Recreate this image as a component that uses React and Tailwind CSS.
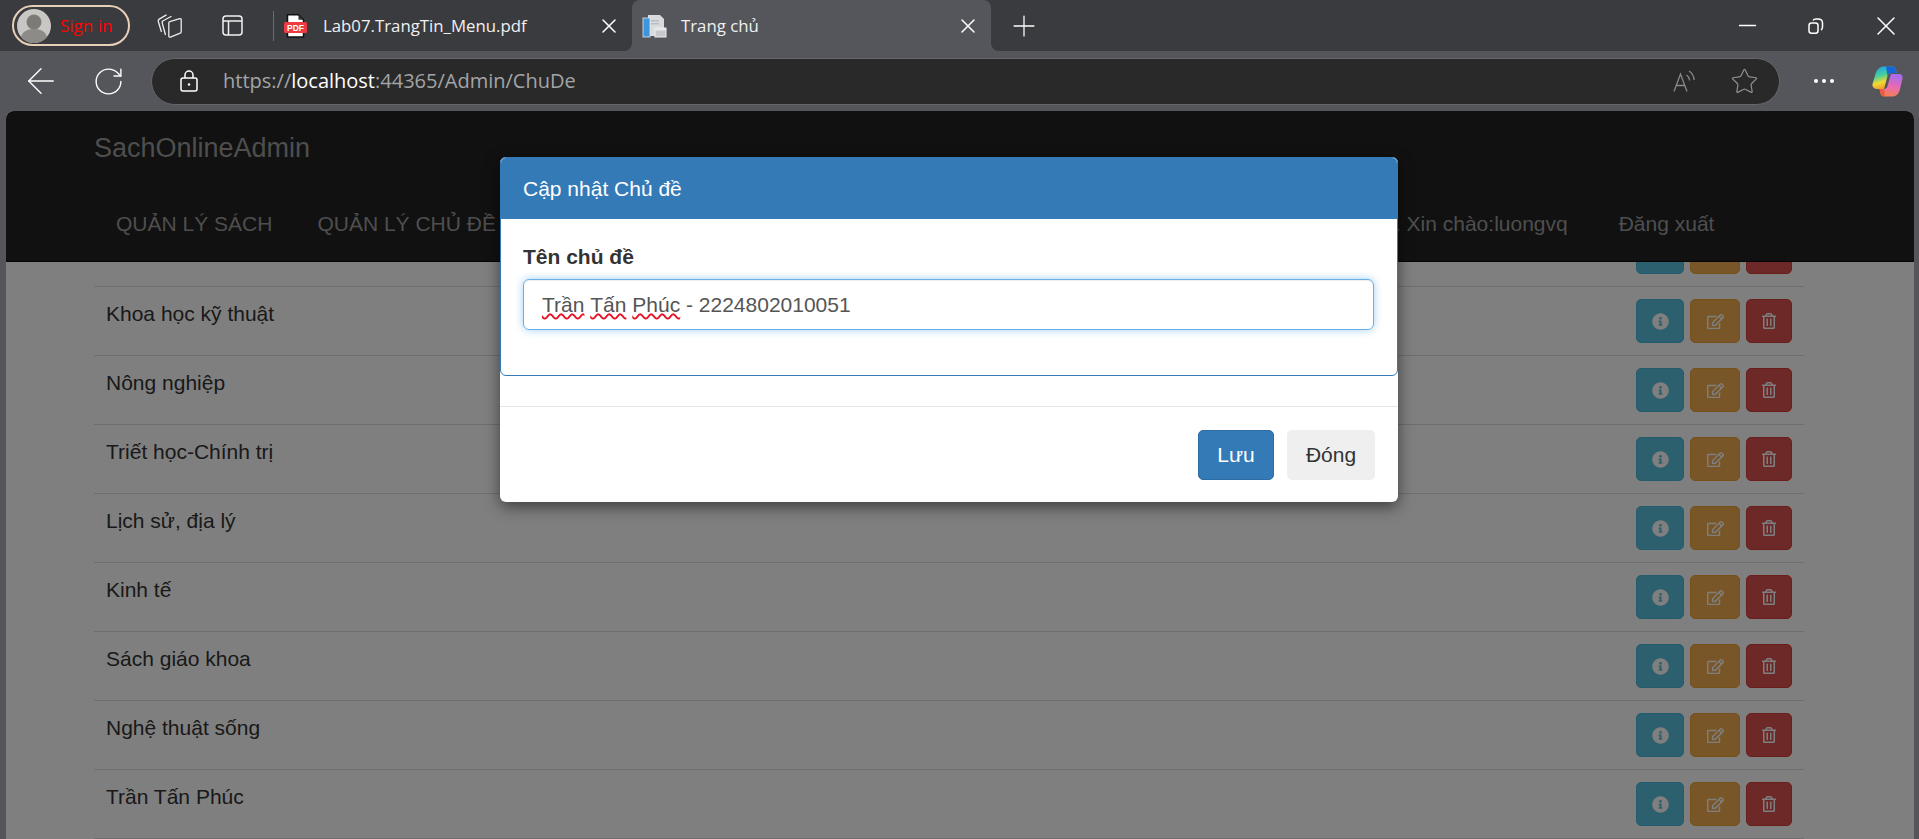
import React from 'react';
import { FaInfoCircle, FaRegEdit, FaRegTrashAlt } from 'react-icons/fa';
import { ArrowLeft, RotateCw, Plus, X, Minus, Star } from 'lucide-react';

const topics = [
  'Văn học',
  'Khoa học kỹ thuật',
  'Nông nghiệp',
  'Triết học-Chính trị',
  'Lịch sử, địa lý',
  'Kinh tế',
  'Sách giáo khoa',
  'Nghệ thuật sống',
  'Trần Tấn Phúc',
];

const Avatar = () => (
  <svg width="34" height="34" viewBox="0 0 34 34" className="shrink-0">
    <circle cx="17" cy="17" r="17" fill="#c9c7c4" />
    <circle cx="17" cy="13" r="7.500" fill="#7d7b78" />
    <path d="M4 28c2-7 8-8 13-8s11 1 13 8a17 17 0 0 1-26 0z" fill="#8d8b88" />
  </svg>
);

const WorkspacesIcon = () => (
  <svg width="25" height="24" viewBox="0 0 25 24" fill="none" stroke="#ececec" strokeWidth="1.300" className="shrink-0">
    <path d="M4.500 18L1.300 7.500C1 6.500 1.300 5.700 2.200 5.100L9.500 .9" />
    <path d="M8.500 21L5.200 9c-.3-1 0-1.800 1-2.300L14.500 2.300" />
    <path d="M12.800 7.600l10-3c.8-.2 1.400.2 1.400 1v12.200c0 .7-.3 1.100-1 1.400l-9.800 3.900c-.9.3-1.600-.2-1.600-1.100V8.700c0-.5.400-.9 1-1.100z" />
  </svg>
);

const VerticalTabsIcon = () => (
  <svg width="21" height="21" viewBox="0 0 21 21" fill="none" stroke="#f2f2f2" strokeWidth="1.500" className="shrink-0">
    <rect x="1" y="1" width="19" height="19" rx="3" />
    <path d="M1 6h19M6.500 6v14" />
  </svg>
);

const PdfIcon = () => (
  <svg width="23" height="24" viewBox="0 0 23 24" className="shrink-0">
    <path d="M3.500.8h11l5 5V23h-16z" fill="#fff" stroke="#111" strokeWidth="1.500" />
    <path d="M14.500.8v5h5" fill="#333" />
    <rect x="0" y="8" width="23" height="11" rx="1.500" fill="#f03a42" />
    <text x="11.500" y="16.800" textAnchor="middle" fontSize="8.500" fontWeight="700" fill="#fff" fontFamily="Liberation Sans, sans-serif">PDF</text>
  </svg>
);

const PageIcon = () => (
  <svg width="25" height="24" viewBox="0 0 25 24" className="shrink-0">
    <path d="M6 1h12l4 4v17H6z" fill="#d8dadd" />
    <rect x="1" y="4" width="7" height="19" fill="#3f95dc" stroke="#d8e6f2" strokeWidth="0.800" />
    <rect x="9" y="6" width="8" height="1.500" fill="#b9bcc0" />
    <rect x="9" y="9" width="8" height="1.500" fill="#b9bcc0" />
    <rect x="13" y="14" width="11" height="9" fill="#c6c8cb" stroke="#eee" />
    <rect x="13" y="14" width="11" height="2.500" fill="#e8e8e8" />
  </svg>
);

const ReadAloudIcon = () => (
  <svg width="23" height="22" viewBox="0 0 23 22" fill="none" stroke="#8a8a8a" strokeWidth="1.300" className="shrink-0">
    <path d="M1 21.500L7.500 4 14 21.500M3.200 15.500h8.600" />
    <path d="M13.500 5c1.700 1 2.800 2.700 3.200 5.500M16 1c3 1.800 4.800 5 5.200 9" />
  </svg>
);

const CopilotLogo = () => (
  <svg width="31" height="31" viewBox="0 0 31 31" className="shrink-0">
    <defs>
      <linearGradient id="copilotLeft" x1="0" y1="0" x2="0.300" y2="1">
        <stop offset="0" stopColor="#1b9be8" />
        <stop offset="0.45" stopColor="#45d0a0" />
        <stop offset="0.75" stopColor="#f2d92f" />
        <stop offset="1" stopColor="#f2a02f" />
      </linearGradient>
      <linearGradient id="copilotRight" x1="0.500" y1="0" x2="0.300" y2="1">
        <stop offset="0" stopColor="#a56cf0" />
        <stop offset="0.55" stopColor="#ea6bb0" />
        <stop offset="1" stopColor="#f7824d" />
      </linearGradient>
    </defs>
    <path d="M12 .5h8c2 0 3.500 1 3.800 3l1 3.500H19c-2 0-3 1-3.500 3L12 23h-7c-3 0-5-2.500-4.500-5L3.500 8C5 3 8 .5 12 .5z" fill="url(#copilotLeft)" />
    <path d="M14 .5h6c2 0 3.500 1 3.800 3l1 3.500H19c-2 0-3 1-3.500 3z" fill="#1666d8" />
    <path d="M19 8h8c2.500 0 4 2 3.500 4.500L28 23c-1 5-4 7.500-8 7.500h-7.500c-2 0-3.500-1-4-3l-1-4.500H12c2 0 3-1 3.500-3z" fill="url(#copilotRight)" />
    <path d="M7.500 23H12c.8 3 .5 7.500.5 7.500-2 0-3.500-1-4-3z" fill="#ef5a3c" />
  </svg>
);

const BrowserChrome = () => (
  <div className="shrink-0">
    <div className="flex h-[51px] bg-[#55565b]">
      <div className="flex h-full w-[632px] items-center rounded-br-lg bg-[#3a3b3f] pl-[12px] pr-[11px]">
        <div className="flex h-[41px] w-[118px] shrink-0 items-center gap-[9px] rounded-full border-2 border-[#e8d0b8] pl-[3px]">
          <Avatar />
          <span className="font-['Open_Sans',sans-serif] text-[17px] text-[#f00]">Sign in</span>
        </div>
        <div className="ml-[27px]"><WorkspacesIcon /></div>
        <div className="ml-[40px]"><VerticalTabsIcon /></div>
        <div className="ml-[30px] h-[30px] w-px shrink-0 bg-[#6b6c70]" />
        <div className="ml-[10px]"><PdfIcon /></div>
        <span className="ml-[16px] whitespace-nowrap font-['Open_Sans',sans-serif] text-[16.800px] text-[#f0f0f0]">Lab07.TrangTin_Menu.pdf</span>
        <X size={24} strokeWidth={1.500} className="ml-auto shrink-0 text-white" />
      </div>
      <div className="w-[359px] bg-[linear-gradient(#3a3b3f_50%,#55565b_50%)]">
        <div className="flex h-full items-center rounded-t-lg bg-[#55565b] pl-[10px] pr-[11px]">
          <PageIcon />
          <span className="ml-[14px] font-['Open_Sans',sans-serif] text-[16.800px] text-[#f0f0f0]">Trang chủ</span>
          <X size={24} strokeWidth={1.500} className="ml-auto text-white" />
        </div>
      </div>
      <div className="flex h-full flex-1 items-center rounded-bl-lg bg-[#3a3b3f] pr-[17px]">
        <Plus size={34} strokeWidth={0.900} className="ml-[16px] text-white" />
        <Minus size={27} strokeWidth={1.500} className="ml-auto text-white" />
        <svg width="16" height="16" viewBox="0 0 16 16" fill="none" stroke="#fff" strokeWidth="1.500" className="ml-[47px]">
          <rect x="1" y="5" width="9" height="10.200" rx="2.500" />
          <path d="M5 2.500C5.500 1.500 6.300 1 8 1h2c2.500 0 4.500 1.500 4.500 4v4c0 1.500-.5 2.500-1.500 3" />
        </svg>
        <X size={32} strokeWidth={1.100} className="ml-[46px] text-white" />
      </div>
    </div>
    <div className="flex h-[60px] items-center bg-[#55565b] pl-[20px] pr-[16px]">
      <ArrowLeft size={42} strokeWidth={0.800} className="shrink-0 text-white" />
      <RotateCw size={33} strokeWidth={1} className="ml-[30px] shrink-0 text-white" />
      <div className="ml-[26px] flex h-[47px] flex-1 items-center rounded-full border border-[#66676b] bg-[#29292a] pl-[28px] pr-[20px]">
        <svg width="18" height="22" viewBox="0 0 18 22" fill="none" stroke="#fff" strokeWidth="1.500">
          <rect x="1" y="8" width="16" height="13" rx="2" />
          <path d="M5 8V5a4 4 0 0 1 8 0v3" />
          <circle cx="9" cy="14.500" r="1.200" fill="#fff" stroke="none" />
        </svg>
        <span className="ml-[25px] font-['Open_Sans',sans-serif] text-[20px] text-[#a3a4a6]">
          https://<span className="text-white">localhost</span>:44365/Admin/ChuDe
        </span>
        <div className="ml-auto flex items-center gap-[34px]">
          <ReadAloudIcon />
          <Star size={29} strokeWidth={1} className="text-[#8f8f8f]" />
        </div>
      </div>
      <svg width="20" height="4" viewBox="0 0 20 4" fill="#fff" className="ml-[34px] shrink-0">
        <circle cx="2" cy="2" r="2" />
        <circle cx="10" cy="2" r="2" />
        <circle cx="18" cy="2" r="2" />
      </svg>
      <div className="ml-[38px]"><CopilotLogo /></div>
    </div>
  </div>
);

const TopicRow = ({ name }) => (
  <div className="flex h-[69px] items-center justify-between border-b border-[#ddd] px-[12px] text-[21px] text-[#333]">
    <span className="-translate-y-[7px]">{name}</span>
    <div className="flex gap-[6px]">
      <button className="flex h-[44px] w-[48px] items-center justify-center rounded-[5px] border border-[#46b8da] bg-[#5bc0de]"><FaInfoCircle size={17} className="text-white" /></button>
      <button className="flex h-[44px] w-[50px] items-center justify-center rounded-[5px] border border-[#eea236] bg-[#f0ad4e]"><FaRegEdit size={17} className="text-white" /></button>
      <button className="flex h-[44px] w-[46px] items-center justify-center rounded-[5px] border border-[#d43f3a] bg-[#d9534f]"><FaRegTrashAlt size={16} className="text-white" /></button>
    </div>
  </div>
);

const spellClass = 'underline decoration-[#e81123] decoration-wavy decoration-[1.500px] underline-offset-[1px] [text-decoration-skip-ink:none]';

const EditModal = () => (
  <div className="absolute left-[494px] top-[46px] w-[898px] rounded-[6px] bg-white shadow-[0_5px_15px_rgba(0,0,0,0.5)]">
    <div className="rounded-[6px] border border-[#337ab7]">
      <div className="flex h-[61px] items-center rounded-t-[5px] bg-[#337ab7] px-[22px] text-[21px] text-white">Cập nhật Chủ đề</div>
      <div className="h-[156px] px-[22px] pt-[23px]">
        <label className="block text-[21px] font-bold leading-[30px] text-[#333]">Tên chủ đề</label>
        <div className="mt-[7px] flex h-[51px] w-[851px] items-center rounded-[6px] border border-[#66afe9] px-[18px] text-[21px] text-[#555] shadow-[inset_0_1px_1px_rgba(0,0,0,0.075),0_0_8px_rgba(102,175,233,0.6)]">
          <span className={spellClass}>Trần</span>
          <span>&nbsp;</span>
          <span className={spellClass}>Tấn</span>
          <span>&nbsp;</span>
          <span className={spellClass}>Phúc</span>
          <span>&nbsp;- 2224802010051</span>
        </div>
      </div>
    </div>
    <div className="mt-[30px] flex h-[96px] justify-end gap-[13px] border-t border-[#e5e5e5] pr-[23px] pt-[23px]">
      <button className="h-[50px] w-[76px] rounded-[5px] border border-[#2e6da4] bg-[#337ab7] text-[21px] text-white">Lưu</button>
      <button className="h-[50px] w-[88px] rounded-[5px] bg-[#efefef] text-[21px] text-[#333]">Đóng</button>
    </div>
  </div>
);

const App = () => {
  return (
    <div className="flex h-[839px] w-full flex-col overflow-hidden bg-[#55565b] font-['Liberation_Sans',Arial,sans-serif]">
      <BrowserChrome />
      <div className="relative ml-[6px] mr-[5px] flex-1 overflow-hidden rounded-t-lg bg-white">
        {/* navbar stays on top of the scrolled list */}
        <div className="relative z-10 h-[151px] border-b border-[#080808] bg-[#222] pl-[88px] text-[#9d9d9d]">
          <div className="pt-[22px] text-[27px] leading-[30px]">SachOnlineAdmin</div>
          <div className="mt-[46px] flex items-center whitespace-nowrap pl-[22px] text-[21px] leading-[30px]">
            <span>QUẢN LÝ SÁCH</span>
            <span className="ml-[45px]">QUẢN LÝ CHỦ ĐỀ</span>
            <span className="ml-[899px]">. Xin chào:luongvq</span>
            <span className="ml-[51px]">Đăng xuất</span>
          </div>
        </div>
        <div className="-mt-[44px] ml-[88px] mr-[110px]">
          {topics.map((name) => (
            <TopicRow key={name} name={name} />
          ))}
        </div>
        <div className="absolute inset-0 z-20 bg-black/50" />
        <div className="absolute inset-0 z-30">
          <EditModal />
        </div>
      </div>
    </div>
  );
};

export default App;
